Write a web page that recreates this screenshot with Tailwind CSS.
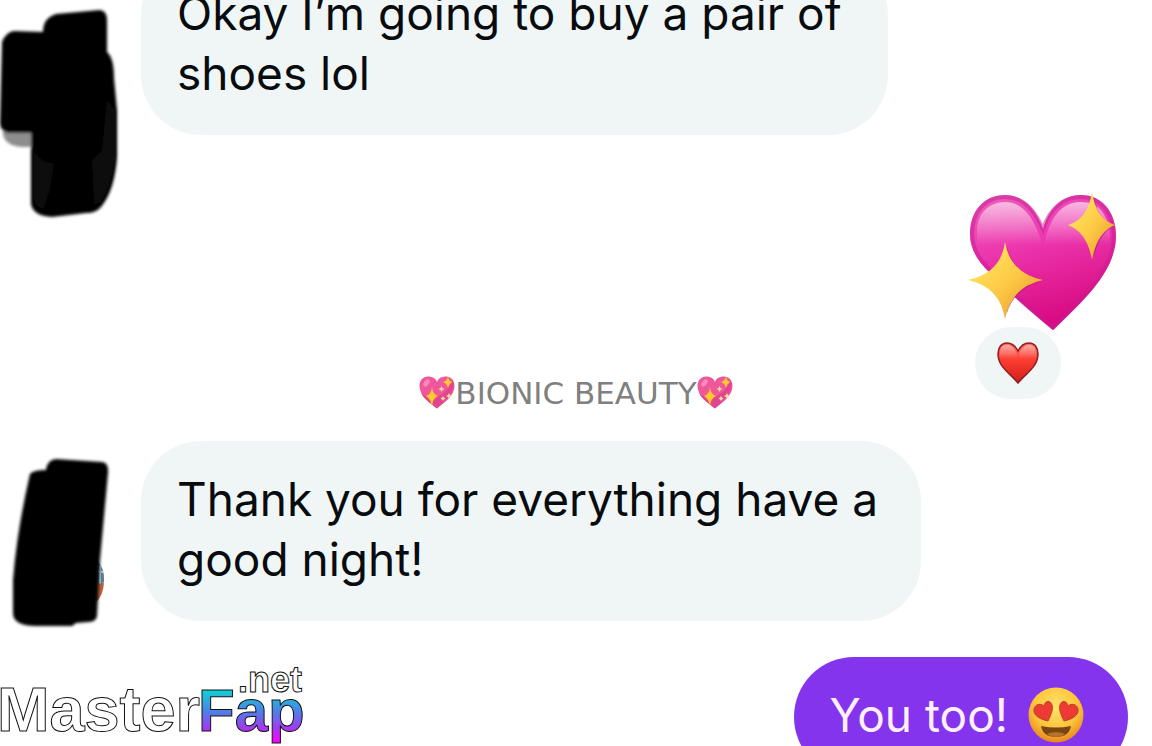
<!DOCTYPE html>
<html lang="en">
<head>
  <meta charset="UTF-8" />
  <meta name="viewport" content="width=device-width, initial-scale=1.0"/>
  <title>Messages</title>
  <script src="https://cdn.jsdelivr.net/npm/@tailwindcss/browser@4"></script>
</head>
<body class="bg-white h-screen overflow-hidden relative font-['Inter',sans-serif] text-[46px] leading-[60px] text-[#080c0f]">

  <!-- shared shapes -->
  <svg class="absolute w-0 h-0" aria-hidden="true">
    <defs>
      <linearGradient id="pink" x1="0" y1="0" x2="0.3" y2="1">
        <stop offset="0" stop-color="#ef62bd"/>
        <stop offset="0.45" stop-color="#ec35ae"/>
        <stop offset="1" stop-color="#d90b82"/>
      </linearGradient>
      <linearGradient id="shine" x1="0" y1="0" x2="0" y2="1">
        <stop offset="0" stop-color="#fff" stop-opacity="0.6"/>
        <stop offset="0.9" stop-color="#fff" stop-opacity="0"/>
      </linearGradient>
      <linearGradient id="gold" x1="0" y1="0" x2="1" y2="1">
        <stop offset="0.2" stop-color="#ffe25a"/>
        <stop offset="0.55" stop-color="#fdc744"/>
        <stop offset="0.9" stop-color="#e09a2c"/>
      </linearGradient>
      <linearGradient id="red" x1="0" y1="0" x2="0" y2="1">
        <stop offset="0" stop-color="#ff7468"/>
        <stop offset="0.45" stop-color="#fb3b30"/>
        <stop offset="1" stop-color="#d01f1a"/>
      </linearGradient>
      <radialGradient id="face" cx="0.5" cy="0.35" r="0.65">
        <stop offset="0" stop-color="#ffe36a"/>
        <stop offset="0.6" stop-color="#fdc63e"/>
        <stop offset="1" stop-color="#e8891c"/>
      </radialGradient>
      <filter id="soft" x="-20%" y="-20%" width="140%" height="140%"><feGaussianBlur stdDeviation="1.5"/></filter>
      <symbol id="small-heart" viewBox="0 0 36 33">
        <path d="M18 6C20 1 24 0.500 27 0.500c5 0 8.500 4 8.500 9.500C35.500 20 25 27 18 32.500 11 27 0.500 20 0.500 10 0.500 4.500 4 0.500 9 0.500c3 0 7 0.500 9 5.500Z" fill="#f0569a"/>
        <path d="M33.500 4c4 8-4 18-15.500 28.500C11 27 5 23 2 17c8 8 24 6 31.500-13Z" fill="#e0468d"/>
        <ellipse cx="7.500" cy="7" rx="2.500" ry="4" transform="rotate(38 7.500 7)" fill="#f98abb"/>
        <path d="M13 11q1 8 6 9-5 2-6 10-2-8-6-10 5-1 6-9Z" fill="#fdc92f"/>
        <path d="M29 0.500q1 5 4.500 5.500Q30 7.500 29 12q-1-4.500-5-6 4-1 5-5.500Z" fill="#fdc92f"/>
        <path d="M22.500 10l1 2 2 1-2 1-1 2-1-2-2-1 2-1ZM30 17l1 2 2 1-2 1-1 2-1-2-2-1 2-1ZM24 20l1 1.500 1.500 1-1.500 1-1 1.500-1-1.500-1.500-1 1.500-1Z" fill="#ffd9a0"/>
      </symbol>
    </defs>
  </svg>

  <main>
    <div class="flex items-start -mt-[45px]">
      <div class="w-[141px] shrink-0">
        <svg class="w-[141px] h-[180px] overflow-visible" viewBox="0 -45 141 180">
          <g filter="url(#soft)">
            <path d="M3 128h32v19H22Q5 146 3 134Z" fill="#8d8d8d"/>
            <path d="M2 42Q6 32 14 31L43 32Q43 18 56 14L100 10Q107 11 107 20L107 52Q114 58 114 78L117 110 117 156Q115 190 101 207 96 213 86 213L52 217Q33 216 31 204L31 133H14Q0 134 0 122Z" fill="#000"/>
          </g>
          <g filter="url(#soft)" fill="#0d0d0d">
            <path d="M107 100L115 110 115 156Q112 186 100 203L94 204 92 160 102 150Z"/>
            <path d="M34 150Q40 163 54 163L50 190 44 208Q34 208 34 198Z"/>
          </g>
        </svg>
      </div>
      <p class="w-[747px] bg-[#f0f6f6] rounded-[60px] pt-7 pb-8 pl-9 pr-6">Okay I’m going to buy a pair of shoes lol</p>
    </div>

    <div class="grid grid-cols-[1fr_auto_1fr] mt-[57px]">
      <div class="col-start-2 self-end -mb-1 flex items-center text-[31px] leading-6 text-[#808080] font-['DejaVu_Sans',sans-serif]">
        <svg class="w-9 h-[33px]" role="img" aria-label="sparkling heart"><use href="#small-heart"/></svg>
        <span>BIONIC BEAUTY</span>
        <svg class="w-9 h-[33px]" role="img" aria-label="sparkling heart"><use href="#small-heart"/></svg>
      </div>
      <div class="justify-self-end flex flex-col items-start mr-[34px] pb-px">
        <svg class="w-[152px] h-[138px]" viewBox="966 192 152 138" role="img" aria-label="sparkling heart">
          <path d="M1043 229C1050 205 1065 195 1081 195 1103 195 1116 213 1116 236 1116 272 1082 302 1053 330Q1005 290 989 272 970 254 970 234C970 211 984 195 1005 195 1022 195 1035 207 1043 229Z" fill="url(#pink)"/>
          <path d="M1043 229C1050 207 1065 197 1081 197 1101 197 1114 214 1114 236 1114 271 1081 300 1053 328Q1006 289 990 270 972 253 972 234C972 212 985 197 1005 197 1021 197 1034 208 1043 229Z" fill="none" stroke="#c61c91" stroke-opacity="0.5" stroke-width="4"/>
          <path d="M977 234C976 215 988 202 1005 202 1020 202 1032 213 1041 240V250H977Z" fill="url(#shine)"/>
          <path d="M1045 240C1052 212 1065 202 1081 202 1098 202 1108 214 1110 234V250H1045Z" fill="url(#shine)"/>
          <g fill="#b81474" fill-opacity="0.6" transform="translate(2 1)">
            <path d="M1005 246Q1012 274 1040 280 1012 288 1005 312 1000 287 972 280 1001 273 1005 246Z"/>
            <path d="M1092 197Q1097 219 1112 225 1098 232 1092 255 1087 232 1072 225 1088 219 1092 197Z"/>
          </g>
          <path d="M1005 242Q1010 273 1043 280 1011 287 1005 319 1000 287 968 280 1001 273 1005 242Z" fill="url(#gold)"/>
          <path d="M1092 192Q1096 219 1115 225 1097 232 1092 260 1087 232 1068 225 1088 219 1092 192Z" fill="url(#gold)"/>
        </svg>
        <button class="relative -mt-2 ml-1 w-24 h-[82px] flex items-center justify-center bg-[#f0f6f6] border-5 border-white rounded-[41px]" aria-label="Reactions">
          <svg class="w-[42px] h-[42px]" viewBox="0 0 42 42">
            <path d="M21 9C24 3 28 1 32 1 38 1 41 6 41 12 41 25 29 31 21 41 13 31 1 25 1 12 1 6 4 1 10 1 14 1 18 3 21 9Z" fill="url(#red)" stroke="#8d2020" stroke-width="1.500"/>
            <path d="M3 11C3 5 6 3 10 3 14 3 17 5 20 12V18H3ZM22 12C25 5 28 3 32 3 36 3 39 5 39 11V18H22Z" fill="url(#shine)" opacity="0.7"/>
          </svg>
        </button>
      </div>
    </div>

    <div class="flex items-start mt-9">
      <div class="w-[141px] shrink-0">
        <svg class="w-[141px] h-[180px] overflow-visible" viewBox="0 441 141 180">
          <path d="M97 561Q105 568 104 582L96 590Z" fill="#5c7c94"/>
          <path d="M96 571L103 572M100 565V584" stroke="#b9cbd6" stroke-width="2"/>
          <path d="M95 584L104 583Q103 596 96 602Z" fill="#b9623c"/>
          <g filter="url(#soft)">
            <path d="M30 474Q33 470 46 470 47 460 56 459L102 462Q109 463 108 473L100 560 97 616Q96 622 88 622L76 623 72 626 36 626Q14 626 13 614L13 580Q17 530 30 474Z" fill="#000"/>
          </g>
        </svg>
      </div>
      <p class="w-[780px] bg-[#f0f6f6] rounded-[60px] pt-7 pb-8 pl-9 pr-6">Thank you for everything have a good night!</p>
    </div>

    <div class="flex justify-end mt-9 mr-6">
      <div class="flex items-center gap-5 bg-[#8434ec] text-[#fff0ff] rounded-[60px] pt-7 pb-8 pl-9 pr-11">
        <p>You too!</p>
        <svg class="w-14 h-14" viewBox="0 0 56 56" role="img" aria-label="smiling face with heart eyes">
          <circle cx="28" cy="28" r="27.500" fill="url(#face)"/>
          <path d="M13 39Q28 42 43 39 41 50 28 50 15 50 13 39Z" fill="#7a4510"/>
          <path d="M19 47Q28 43 37 47 34 50 28 50 22 50 19 47Z" fill="#b4722a"/>
          <g fill="#ee3a35" stroke="#b9451f" stroke-width="1">
            <path d="M16 19C17 14 21 13 23 16 26 20 24 26 20 34 11 32 5 28 6 22 7 17 13 16 16 19Z"/>
            <path d="M40 19C39 14 35 13 33 16 30 20 32 26 36 34 45 32 51 28 50 22 49 17 43 16 40 19Z"/>
          </g>
        </svg>
      </div>
    </div>
  </main>

  <!-- watermark -->
  <svg class="absolute bottom-0 left-0 w-[320px] h-[96px] font-['Liberation_Sans',Arial,sans-serif] font-bold" viewBox="0 650 320 96">
    <defs>
      <linearGradient id="brand" gradientUnits="userSpaceOnUse" x1="0" y1="685" x2="0" y2="742">
        <stop offset="0" stop-color="#00e6d2"/>
        <stop offset="0.45" stop-color="#4a84e6"/>
        <stop offset="0.75" stop-color="#a03cf0"/>
        <stop offset="1" stop-color="#ff00ff"/>
      </linearGradient>
    </defs>
    <g stroke="#111" stroke-width="1">
      <text x="-3" y="731" font-size="63" fill="#fff">Master</text>
      <text x="198" y="731" font-size="60" fill="url(#brand)">Fap</text>
      <text x="238" y="692" font-size="36" fill="#fff">.net</text>
    </g>
  </svg>

</body>
</html>
